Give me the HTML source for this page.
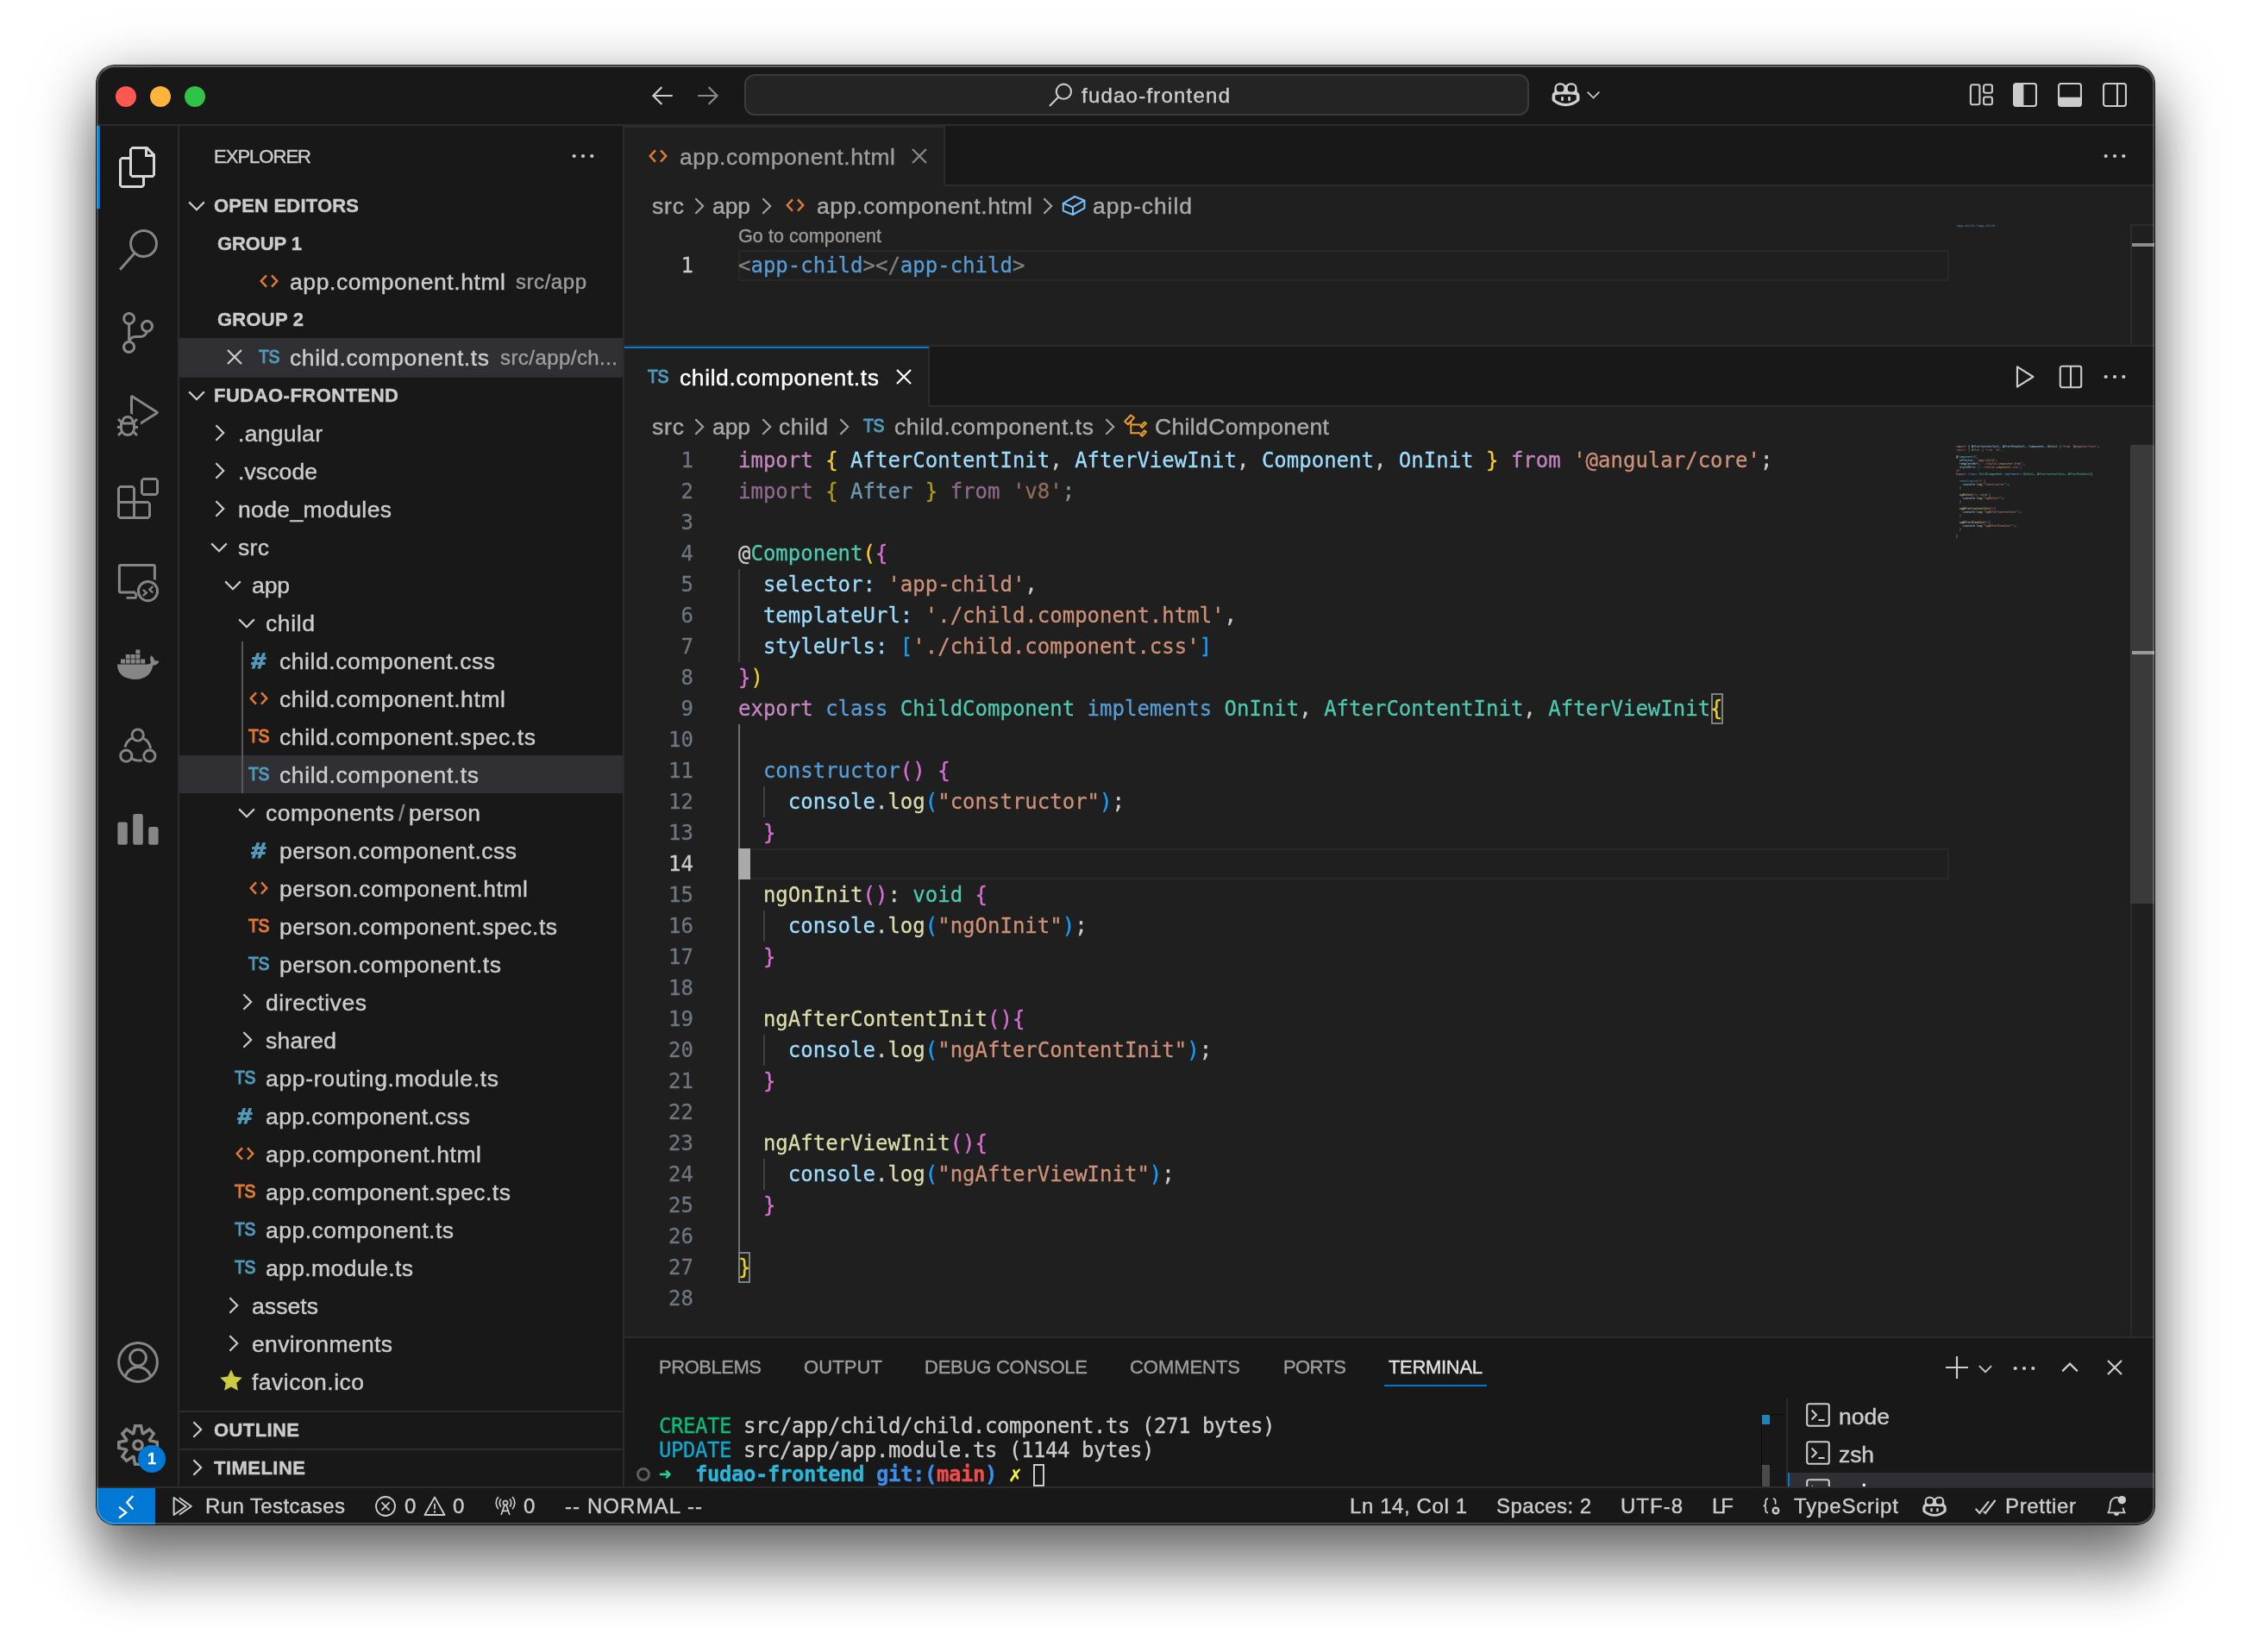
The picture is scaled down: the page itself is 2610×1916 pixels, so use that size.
<!DOCTYPE html>
<html lang="en"><head><meta charset="utf-8"><title>child.component.ts — fudao-frontend</title>
<style>
html,body{margin:0;padding:0;background:#fff;}
body{width:2610px;height:1916px;position:relative;overflow:hidden;font-family:"Liberation Sans",sans-serif;-webkit-font-smoothing:antialiased;}
#sh{position:absolute;left:112px;top:76px;width:2386px;height:1692px;border-radius:21px;
 box-shadow:0 0 0 1px rgba(0,0,0,.85),0 24px 71px rgba(0,0,0,.60),0 74px 52px rgba(0,0,0,.18);}
#w{position:absolute;left:112px;top:76px;width:2386px;height:1692px;border-radius:21px;overflow:hidden;background:#181818;}
#o{position:absolute;left:-112px;top:-76px;width:2610px;height:1916px;will-change:transform;}
#rim{position:absolute;left:112px;top:76px;width:2386px;height:1692px;border-radius:21px;box-sizing:border-box;border:2px solid rgba(255,255,255,.21);border-top-color:rgba(255,255,255,.32);pointer-events:none;}
#o div,#o svg,#o span.a{position:absolute;}
.t{white-space:pre;font-size:26px;color:#ccc;-webkit-text-stroke:0.4px;}
.m{white-space:pre;font-family:"DejaVu Sans Mono","Liberation Mono",monospace;font-size:24px;letter-spacing:0;-webkit-text-stroke:0.3px;}
.m span,.t span{position:static;}
.i{overflow:visible;}
</style></head><body>
<div id="sh"></div>
<div id="w"><div id="o">
<div style="left:112px;top:76px;width:2386px;height:70px;background:#181818;border-bottom:2px solid #2b2b2b;box-sizing:border-box;"></div>
<div style="left:112px;top:146px;width:96px;height:1578px;background:#181818;border-right:2px solid #2b2b2b;box-sizing:border-box;"></div>
<div style="left:208px;top:146px;width:516px;height:1578px;background:#181818;border-right:2px solid #2b2b2b;box-sizing:border-box;"></div>
<div style="left:724px;top:146px;width:1774px;height:1404px;background:#1f1f1f;"></div>
<div style="left:724px;top:1550px;width:1774px;height:174px;background:#181818;border-top:2px solid #2b2b2b;box-sizing:border-box;"></div>
<div style="left:112px;top:1724px;width:2386px;height:44px;background:#181818;border-top:2px solid #2b2b2b;box-sizing:border-box;"></div>
<div style="left:134px;top:100px;width:24px;height:24px;border-radius:50%;background:#fe5850;"></div>
<div style="left:174px;top:100px;width:24px;height:24px;border-radius:50%;background:#fcb43a;"></div>
<div style="left:214px;top:100px;width:24px;height:24px;border-radius:50%;background:#2fc447;"></div>
<svg class="i" style="left:752px;top:95px;" width="32" height="32" viewBox="0 0 16 16" fill="none" stroke="#cccccc" color="#cccccc"><path d="M13.9 8H2.9M7.7 3L2.7 8L7.7 13" fill="none" stroke="currentColor" stroke-width="1.1"/></svg>
<svg class="i" style="left:805px;top:95px;" width="32" height="32" viewBox="0 0 16 16" fill="none" stroke="#8a8a8a" color="#8a8a8a"><path d="M2.1 8H13.1M8.3 3L13.3 8L8.3 13" fill="none" stroke="currentColor" stroke-width="1.1"/></svg>
<div style="left:863px;top:86px;width:910px;height:48px;box-sizing:border-box;border:2px solid #3b3b3b;border-radius:12px;background:#242424;"></div>
<svg class="i" style="left:1214px;top:94px;" width="32" height="32" viewBox="0 0 16 16" fill="none" stroke="#cccccc" color="#cccccc"><circle cx="9.700" cy="6.100" r="4.300" fill="none" stroke="currentColor" stroke-width="1.05"/><path d="M6.600 9.300L1.500 14.500" fill="none" stroke="currentColor" stroke-width="1.05"/></svg>
<div class="t" style="left:1254px;top:87px;height:48px;line-height:48px;font-size:24px;color:#cccccc;letter-spacing:1.221px;">fudao-frontend</div>
<svg class="i" style="left:1798px;top:92px;" width="35" height="35" viewBox="0 0 16 16" fill="none" stroke="#d0d0d0" color="#d0d0d0"><path d="M8 3.3c-.9-1.2-2.4-1.6-3.9-1.2C2.7 2.5 2 3.6 2 5v1.6c-.8.5-1.3 1.3-1.3 2.2v1.8c0 .5.2.9.6 1.2C3.1 13.200 5.400 14.3 8 14.3s4.900-1.100 6.700-2.500c.4-.3.6-.7.6-1.200V8.800c0-.9-.5-1.700-1.300-2.200V5c0-1.400-.7-2.500-2.100-2.900C10.400 1.700 8.900 2.100 8 3.300z" fill="currentColor" stroke="none"/><rect x="3.1" y="3" width="3.9" height="3.6" rx="1.6" fill="#181818" stroke="none"/><rect x="9" y="3" width="3.9" height="3.6" rx="1.6" fill="#181818" stroke="none"/><path d="M2.4 8.400C4 7.900 6 8 8 8s4-.1 5.600.4v2.300C12 12 10 12.800 8 12.800S4 12 2.400 10.700z" fill="#181818" stroke="none"/><rect x="5.500" y="9.100" width="1.300" height="2.400" rx=".65" fill="currentColor" stroke="none"/><rect x="9.200" y="9.100" width="1.300" height="2.400" rx=".65" fill="currentColor" stroke="none"/></svg>
<svg class="i" style="left:1835px;top:97px;" width="25" height="25" viewBox="0 0 16 16" fill="none" stroke="#cccccc" color="#cccccc"><polyline points="3.6,6.2 8,10.6 12.4,6.2" fill="none" stroke="currentColor" stroke-width="1.1"/></svg>
<svg class="i" style="left:2281px;top:94px;" width="32" height="32" viewBox="0 0 16 16" fill="none" stroke="#cccccc" color="#cccccc"><rect x="1.95" y="2.15" width="5.25" height="11.5" rx="1" fill="none" stroke="currentColor" stroke-width="1.05"/><rect x="9.55" y="2.15" width="4.9" height="4.75" rx="1" fill="none" stroke="currentColor" stroke-width="1.05"/><rect x="9.55" y="9.25" width="4.9" height="4.4" rx="1" fill="none" stroke="currentColor" stroke-width="1.05"/></svg>
<svg class="i" style="left:2332px;top:94px;" width="32" height="32" viewBox="0 0 16 16" fill="none" stroke="#cccccc" color="#cccccc"><rect x="1.525" y="1.525" width="12.95" height="12.95" rx="1.3" fill="none" stroke="currentColor" stroke-width="1.05"/><path d="M6.9 1.525V14.475H2.8a1.3 1.3 0 0 1-1.3-1.3V2.8a1.3 1.3 0 0 1 1.3-1.3z" fill="currentColor" stroke="currentColor" stroke-width=".6"/></svg>
<svg class="i" style="left:2384px;top:94px;" width="32" height="32" viewBox="0 0 16 16" fill="none" stroke="#cccccc" color="#cccccc"><rect x="1.525" y="1.525" width="12.95" height="12.95" rx="1.3" fill="none" stroke="currentColor" stroke-width="1.05"/><path d="M1.525 9.700H14.475V13.200a1.300 1.300 0 0 1-1.300 1.300H2.800a1.300 1.300 0 0 1-1.300-1.300z" fill="currentColor" stroke="currentColor" stroke-width=".6"/></svg>
<svg class="i" style="left:2436px;top:94px;" width="32" height="32" viewBox="0 0 16 16" fill="none" stroke="#cccccc" color="#cccccc"><rect x="1.525" y="1.525" width="12.95" height="12.95" rx="1.3" fill="none" stroke="currentColor" stroke-width="1.05"/><path d="M9.500 1.525V14.475" fill="none" stroke="currentColor" stroke-width="1.05"/></svg>
<div style="left:112px;top:146px;width:4px;height:96px;background:#0078d4;"></div>
<svg class="i" style="left:136px;top:170px;" width="48" height="48" viewBox="0 0 24 24" fill="none" stroke="#d7d7d7" color="#d7d7d7"><path fill="currentColor" stroke="none" d="M17.5 0h-9L7 1.5V6H2.5L1 7.5v15.07L2.5 24h12.07L16 22.57V18h4.7l1.3-1.43V4.5L17.5 0zm0 2.12l2.38 2.38H17.5V2.12zm-3 20.38h-12v-15H7v9.07L8.5 18h6v4.5zm6-6h-12v-15H16V6h4.5v10.5z"/></svg>
<svg class="i" style="left:136px;top:266px;" width="48" height="48" viewBox="0 0 24 24" fill="none" stroke="#868686" color="#868686"><path fill="currentColor" stroke="none" d="M15.25 0a8.25 8.25 0 0 0-6.18 13.72L1 22.88l1.12 1 8.05-9.12A8.251 8.251 0 1 0 15.25.01V0zm0 15a6.75 6.75 0 1 1 0-13.5 6.75 6.75 0 0 1 0 13.5z"/></svg>
<svg class="i" style="left:136px;top:362px;" width="48" height="48" viewBox="0 0 24 24" fill="none" stroke="#868686" color="#868686"><path fill="currentColor" stroke="none" d="M21.007 8.222A3.738 3.738 0 0 0 15.045 5.2a3.737 3.737 0 0 0 1.156 6.583 2.988 2.988 0 0 1-2.668 1.67h-2.99a4.456 4.456 0 0 0-2.989 1.165V7.4a3.737 3.737 0 1 0-1.494 0v9.117a3.776 3.776 0 1 0 1.816.099 2.99 2.99 0 0 1 2.668-1.667h2.99a4.484 4.484 0 0 0 4.223-3.039 3.736 3.736 0 0 0 3.25-3.687zM4.565 3.738a2.242 2.242 0 1 1 4.484 0 2.242 2.242 0 0 1-4.484 0zm4.484 16.441a2.242 2.242 0 1 1-4.484 0 2.242 2.242 0 0 1 4.484 0zm8.221-9.715a2.242 2.242 0 1 1 0-4.485 2.242 2.242 0 0 1 0 4.485z"/></svg>
<svg class="i" style="left:136px;top:458px;" width="48" height="48" viewBox="0 0 24 24" fill="none" stroke="#868686" color="#868686"><path fill="currentColor" stroke="none" d="M10.94 13.5l-1.32 1.32a3.73 3.73 0 0 0-7.24 0L1.06 13.5 0 14.56l1.72 1.72-.22.22V18H0v1.5h1.5v.08c.077.489.214.966.41 1.42L0 22.94 1.06 24l1.65-1.65A4.308 4.308 0 0 0 6 24a4.31 4.31 0 0 0 3.29-1.65L10.94 24 12 22.94 10.09 21c.198-.464.336-.951.41-1.45v-.1H12V18h-1.5v-1.5l-.22-.22L12 14.56l-1.06-1.06zM6 13.5a2.25 2.25 0 0 1 2.25 2.25h-4.5A2.25 2.25 0 0 1 6 13.5zm3 6a3.33 3.33 0 0 1-3 3 3.33 3.33 0 0 1-3-3v-2.25h6v2.25zm14.76-9.9v1.26L13.5 17.37V15.6l8.5-5.37L9 2v9.46a5.07 5.07 0 0 0-1.5-.72V.63L8.64 0l15.12 9.6z"/></svg>
<svg class="i" style="left:136px;top:554px;" width="48" height="48" viewBox="0 0 24 24" fill="none" stroke="#868686" color="#868686"><path fill="currentColor" stroke="none" d="M13.5 1.5L15 0h7.5L24 1.5V9l-1.5 1.5H15L13.5 9V1.5zm1.5 0V9h7.5V1.5H15zM0 15V6l1.5-1.5H9L10.5 6v7.5H18l1.5 1.5v7.5L18 24H1.5L0 22.500V15zm9-1.500V6H1.500v7.500H9zM9 15H1.500v7.500H9V15zm1.500 7.500H18V15h-7.500v7.500z"/></svg>
<svg class="i" style="left:136px;top:650px;" width="48" height="48" viewBox="0 0 24 24" fill="none" stroke="#868686" color="#868686"><path d="M21.7 11.2V3.4a.7.7 0 0 0-.7-.7H1.9a.7.7 0 0 0-.7.7v14.35a.7.7 0 0 0 .7.7h8.6" fill="none" stroke="currentColor" stroke-width="1.5"/><path d="M5.3 21.65h5.9M10.55 18.6l.5 2.6" fill="none" stroke="currentColor" stroke-width="1.4"/><circle cx="17.75" cy="17.8" r="5.55" fill="none" stroke="currentColor" stroke-width="1.5"/><path d="M14.9 17l2 1.7-2 1.700M20.600 15.100l-1.900 1.800 1.900 1.800" fill="none" stroke="currentColor" stroke-width="1.15"/></svg>
<svg class="i" style="left:136px;top:746px;" width="48" height="48" viewBox="0 0 24 24" fill="none" stroke="#868686" color="#868686"><path fill="currentColor" stroke="none" d="M0 12.3h16.9c1.2 0 2.1-.3 2.7-1-.7-1.200-.8-2.800 0-4.200 1.200.9 1.900 2 2.100 3.200.9-.3 1.900-.2 2.500.3-.6 1.500-1.900 2.200-3.500 2.300C19.900 17.600 16.500 21 10.500 21 4.500 21 0 18.200 0 12.300z"/><path fill="currentColor" stroke="none" d="M2 9.300h2.500v2.400H2zM4.900 9.300h2.500v2.400H4.900zM7.800 9.300h2.500v2.400H7.800zM10.700 9.300h2.500v2.400h-2.500zM13.600 9.300h2.500v2.400h-2.500zM4.900 6.500h2.500v2.400H4.900zM7.800 6.500h2.500v2.400H7.800zM10.700 6.500h2.500v2.400h-2.500zM10.700 3.700h2.500v2.400h-2.500z"/></svg>
<svg class="i" style="left:136px;top:842px;" width="48" height="48" viewBox="0 0 24 24" fill="none" stroke="#868686" color="#868686"><circle cx="11.85" cy="5.25" r="3.3" fill="none" stroke="currentColor" stroke-width="1.45"/><circle cx="5.15" cy="17.3" r="3.3" fill="none" stroke="currentColor" stroke-width="1.45"/><circle cx="18.7" cy="17.3" r="3.3" fill="none" stroke="currentColor" stroke-width="1.45"/><path d="M8.5 7A8 8 0 0 0 4.500 12.300M15.400 7.200a8 8 0 0 1 3.900 5.900M8.300 18.900c1.700 1.100 4 1.400 6.100.9" fill="none" stroke="currentColor" stroke-width="1.45"/></svg>
<svg class="i" style="left:136px;top:938px;" width="48" height="48" viewBox="0 0 24 24" fill="none" stroke="#868686" color="#868686"><rect x="0.200" y="7.700" width="5.700" height="13.200" rx="1.200" fill="currentColor" stroke="none"/><rect x="9.100" y="3" width="5.800" height="17.900" rx="1.200" fill="currentColor" stroke="none"/><rect x="18.100" y="10.500" width="5.700" height="10.400" rx="1.200" fill="currentColor" stroke="none"/></svg>
<svg class="i" style="left:136px;top:1556px;" width="48" height="48" viewBox="0 0 24 24" fill="none" stroke="#868686" color="#868686"><circle cx="12" cy="12" r="11.200" fill="none" stroke="currentColor" stroke-width="1.5"/><circle cx="12" cy="9.300" r="4.700" fill="none" stroke="currentColor" stroke-width="1.5"/><path d="M4.700 20.200c.9-3.300 3.900-5.400 7.300-5.400s6.400 2.100 7.300 5.400" fill="none" stroke="currentColor" stroke-width="1.5"/></svg>
<svg class="i" style="left:136px;top:1652px;" width="48" height="48" viewBox="0 0 24 24" fill="none" stroke="#868686" color="#868686"><path fill="currentColor" stroke="none" d="M19.85 8.75l4.15.83v4.84l-4.15.83 2.35 3.52-3.43 3.43-3.52-2.35-.83 4.15H9.58l-.83-4.15-3.52 2.35-3.43-3.43 2.35-3.52L0 14.42V9.58l4.15-.83L1.8 5.23 5.23 1.8l3.52 2.35L9.58 0h4.84l.83 4.15 3.52-2.35 3.43 3.43-2.35 3.52zm-1.57 5.07l4-.81v-2l-4-.81-.54-1.3 2.29-3.43-1.43-1.43-3.43 2.29-1.3-.54-.81-4h-2l-.81 4-1.3.54-3.43-2.29-1.430 1.430L6.380 8.900l-.54 1.300-4 .81v2l4 .81.54 1.300-2.290 3.430 1.430 1.430 3.430-2.290 1.300.54.81 4h2l.81-4 1.300-.54 3.430 2.290 1.430-1.430-2.290-3.430.54-1.300zm-8.186-4.672A3.430 3.430 0 0 1 12 8.570 3.440 3.440 0 0 1 15.430 12a3.430 3.430 0 1 1-5.336-2.852zm.956 4.274c.281.188.612.288.95.288A1.700 1.700 0 0 0 13.710 12a1.710 1.710 0 1 0-2.660 1.422z"/></svg>
<div style="left:160px;top:1676px;width:32px;height:32px;border-radius:50%;background:#0078d4;"></div>
<div class="t" style="left:160px;top:1676px;height:32px;line-height:32px;font-size:18px;color:#fff;font-weight:700;width:32px;text-align:center;">1</div>
<div class="t" style="left:248px;top:147px;height:70px;line-height:70px;font-size:22px;color:#cccccc;letter-spacing:-0.975px;">EXPLORER</div>
<svg class="i" style="left:660px;top:165px;" width="32" height="32" viewBox="0 0 16 16" fill="none" stroke="#cccccc" color="#cccccc"><circle cx="2.85" cy="8" r="1.05" fill="currentColor" stroke="none"/><circle cx="8" cy="8" r="1.05" fill="currentColor" stroke="none"/><circle cx="13.15" cy="8" r="1.05" fill="currentColor" stroke="none"/></svg>
<svg class="i" style="left:212px;top:222px;" width="32" height="32" viewBox="0 0 16 16" fill="none" stroke="#cccccc" color="#cccccc"><polyline points="3.6,6.2 8,10.6 12.4,6.2" fill="none" stroke="currentColor" stroke-width="1.1"/></svg>
<div class="t" style="left:248px;top:217px;height:44px;line-height:44px;font-size:22px;color:#cccccc;font-weight:700;letter-spacing:0.195px;">OPEN EDITORS</div>
<div class="t" style="left:252px;top:261px;height:44px;line-height:44px;font-size:22px;color:#cccccc;font-weight:700;letter-spacing:-0.104px;">GROUP 1</div>
<div class="t" style="left:252px;top:349px;height:44px;line-height:44px;font-size:22px;color:#cccccc;font-weight:700;letter-spacing:0.229px;">GROUP 2</div>
<svg class="i" style="left:296px;top:310px;" width="32" height="32" viewBox="0 0 16 16" fill="none" stroke="#e37933" color="#e37933"><path d="M6.5 4.7L3.4 8L6.5 11.3M9.5 4.7L12.6 8L9.5 11.3" fill="none" stroke="currentColor" stroke-width="1.25"/></svg>
<div class="t" style="left:336px;top:305px;height:44px;line-height:44px;font-size:26.5px;color:#cccccc;letter-spacing:0.581px;">app.component.html</div>
<div class="t" style="left:598px;top:305px;height:44px;line-height:44px;font-size:24px;color:#9d9d9d;letter-spacing:0.549px;">src/app</div>
<div style="left:208px;top:392px;width:514px;height:44px;background:#2f2f34;"></div>
<svg class="i" style="left:256px;top:398px;" width="32" height="32" viewBox="0 0 16 16" fill="none" stroke="#cccccc" color="#cccccc"><path d="M4 4L12 12M12 4L4 12" fill="none" stroke="currentColor" stroke-width="1.1"/></svg>
<div class="t" style="left:292px;top:398px;width:40px;height:32px;line-height:32px;font-size:21.5px;color:#519aba;text-align:center;-webkit-text-stroke:1.1px #519aba;transform:scaleX(.9);letter-spacing:-0.3px;">TS</div>
<div class="t" style="left:336px;top:393px;height:44px;line-height:44px;font-size:26.5px;color:#cccccc;letter-spacing:0.59px;">child.component.ts</div>
<div class="t" style="left:580px;top:393px;height:44px;line-height:44px;font-size:24px;color:#9d9d9d;letter-spacing:0.439px;">src/app/ch...</div>
<div style="left:208px;top:436px;width:514px;height:2px;background:#2b2b2b;"></div>
<svg class="i" style="left:212px;top:442px;" width="32" height="32" viewBox="0 0 16 16" fill="none" stroke="#cccccc" color="#cccccc"><polyline points="3.6,6.2 8,10.6 12.4,6.2" fill="none" stroke="currentColor" stroke-width="1.1"/></svg>
<div class="t" style="left:248px;top:437px;height:44px;line-height:44px;font-size:22px;color:#cccccc;font-weight:700;letter-spacing:0.48px;">FUDAO-FRONTEND</div>
<svg class="i" style="left:238px;top:486px;" width="32" height="32" viewBox="0 0 16 16" fill="none" stroke="#cccccc" color="#cccccc"><polyline points="6.2,3.6 10.6,8 6.2,12.4" fill="none" stroke="currentColor" stroke-width="1.1"/></svg>
<div class="t" style="left:276px;top:481px;height:44px;line-height:44px;font-size:26.5px;color:#cccccc;letter-spacing:0.319px;">.angular</div>
<svg class="i" style="left:238px;top:530px;" width="32" height="32" viewBox="0 0 16 16" fill="none" stroke="#cccccc" color="#cccccc"><polyline points="6.2,3.6 10.6,8 6.2,12.4" fill="none" stroke="currentColor" stroke-width="1.1"/></svg>
<div class="t" style="left:276px;top:525px;height:44px;line-height:44px;font-size:26.5px;color:#cccccc;letter-spacing:0.112px;">.vscode</div>
<svg class="i" style="left:238px;top:574px;" width="32" height="32" viewBox="0 0 16 16" fill="none" stroke="#cccccc" color="#cccccc"><polyline points="6.2,3.6 10.6,8 6.2,12.4" fill="none" stroke="currentColor" stroke-width="1.1"/></svg>
<div class="t" style="left:276px;top:569px;height:44px;line-height:44px;font-size:26.5px;color:#cccccc;letter-spacing:0.376px;">node_modules</div>
<svg class="i" style="left:238px;top:618px;" width="32" height="32" viewBox="0 0 16 16" fill="none" stroke="#cccccc" color="#cccccc"><polyline points="3.6,6.2 8,10.6 12.4,6.2" fill="none" stroke="currentColor" stroke-width="1.1"/></svg>
<div class="t" style="left:276px;top:613px;height:44px;line-height:44px;font-size:26.5px;color:#cccccc;letter-spacing:0.336px;">src</div>
<svg class="i" style="left:254px;top:662px;" width="32" height="32" viewBox="0 0 16 16" fill="none" stroke="#cccccc" color="#cccccc"><polyline points="3.6,6.2 8,10.6 12.4,6.2" fill="none" stroke="currentColor" stroke-width="1.1"/></svg>
<div class="t" style="left:292px;top:657px;height:44px;line-height:44px;font-size:26.5px;color:#cccccc;letter-spacing:-0.109px;">app</div>
<svg class="i" style="left:270px;top:706px;" width="32" height="32" viewBox="0 0 16 16" fill="none" stroke="#cccccc" color="#cccccc"><polyline points="3.6,6.2 8,10.6 12.4,6.2" fill="none" stroke="currentColor" stroke-width="1.1"/></svg>
<div class="t" style="left:308px;top:701px;height:44px;line-height:44px;font-size:26.5px;color:#cccccc;letter-spacing:0.621px;">child</div>
<div class="t" style="left:280px;top:750px;width:40px;height:32px;line-height:32px;font-size:25px;font-weight:700;color:#519aba;text-align:center;-webkit-text-stroke:1.2px #519aba;transform:scaleX(1.2) skewX(-3deg);">#</div>
<div class="t" style="left:324px;top:745px;height:44px;line-height:44px;font-size:26.5px;color:#cccccc;letter-spacing:0.55px;">child.component.css</div>
<svg class="i" style="left:284px;top:794px;" width="32" height="32" viewBox="0 0 16 16" fill="none" stroke="#e37933" color="#e37933"><path d="M6.5 4.7L3.4 8L6.5 11.3M9.5 4.7L12.6 8L9.5 11.3" fill="none" stroke="currentColor" stroke-width="1.25"/></svg>
<div class="t" style="left:324px;top:789px;height:44px;line-height:44px;font-size:26.5px;color:#cccccc;letter-spacing:0.61px;">child.component.html</div>
<div class="t" style="left:280px;top:838px;width:40px;height:32px;line-height:32px;font-size:21.5px;color:#e37933;text-align:center;-webkit-text-stroke:1.1px #e37933;transform:scaleX(.9);letter-spacing:-0.3px;">TS</div>
<div class="t" style="left:324px;top:833px;height:44px;line-height:44px;font-size:26.5px;color:#cccccc;letter-spacing:0.577px;">child.component.spec.ts</div>
<div style="left:208px;top:876px;width:514px;height:44px;background:#2f2f34;"></div>
<div class="t" style="left:280px;top:882px;width:40px;height:32px;line-height:32px;font-size:21.5px;color:#519aba;text-align:center;-webkit-text-stroke:1.1px #519aba;transform:scaleX(.9);letter-spacing:-0.3px;">TS</div>
<div class="t" style="left:324px;top:877px;height:44px;line-height:44px;font-size:26.5px;color:#cccccc;letter-spacing:0.59px;">child.component.ts</div>
<svg class="i" style="left:270px;top:926px;" width="32" height="32" viewBox="0 0 16 16" fill="none" stroke="#cccccc" color="#cccccc"><polyline points="3.6,6.2 8,10.6 12.4,6.2" fill="none" stroke="currentColor" stroke-width="1.1"/></svg>
<div class="t" style="left:308px;top:921px;height:44px;line-height:44px;font-size:26.5px;color:#cccccc;letter-spacing:0.514px;">components</div>
<div class="t" style="left:462px;top:921px;height:44px;line-height:44px;font-size:26px;color:#8a8a8a;">/</div>
<div class="t" style="left:474px;top:921px;height:44px;line-height:44px;font-size:26.5px;color:#cccccc;letter-spacing:0.394px;">person</div>
<div class="t" style="left:280px;top:970px;width:40px;height:32px;line-height:32px;font-size:25px;font-weight:700;color:#519aba;text-align:center;-webkit-text-stroke:1.2px #519aba;transform:scaleX(1.2) skewX(-3deg);">#</div>
<div class="t" style="left:324px;top:965px;height:44px;line-height:44px;font-size:26.5px;color:#cccccc;letter-spacing:0.441px;">person.component.css</div>
<svg class="i" style="left:284px;top:1014px;" width="32" height="32" viewBox="0 0 16 16" fill="none" stroke="#e37933" color="#e37933"><path d="M6.5 4.7L3.4 8L6.5 11.3M9.5 4.7L12.6 8L9.5 11.3" fill="none" stroke="currentColor" stroke-width="1.25"/></svg>
<div class="t" style="left:324px;top:1009px;height:44px;line-height:44px;font-size:26.5px;color:#cccccc;letter-spacing:0.553px;">person.component.html</div>
<div class="t" style="left:280px;top:1058px;width:40px;height:32px;line-height:32px;font-size:21.5px;color:#e37933;text-align:center;-webkit-text-stroke:1.1px #e37933;transform:scaleX(.9);letter-spacing:-0.3px;">TS</div>
<div class="t" style="left:324px;top:1053px;height:44px;line-height:44px;font-size:26.5px;color:#cccccc;letter-spacing:0.486px;">person.component.spec.ts</div>
<div class="t" style="left:280px;top:1102px;width:40px;height:32px;line-height:32px;font-size:21.5px;color:#519aba;text-align:center;-webkit-text-stroke:1.1px #519aba;transform:scaleX(.9);letter-spacing:-0.3px;">TS</div>
<div class="t" style="left:324px;top:1097px;height:44px;line-height:44px;font-size:26.5px;color:#cccccc;letter-spacing:0.529px;">person.component.ts</div>
<svg class="i" style="left:270px;top:1146px;" width="32" height="32" viewBox="0 0 16 16" fill="none" stroke="#cccccc" color="#cccccc"><polyline points="6.2,3.6 10.6,8 6.2,12.4" fill="none" stroke="currentColor" stroke-width="1.1"/></svg>
<div class="t" style="left:308px;top:1141px;height:44px;line-height:44px;font-size:26.5px;color:#cccccc;letter-spacing:0.562px;">directives</div>
<svg class="i" style="left:270px;top:1190px;" width="32" height="32" viewBox="0 0 16 16" fill="none" stroke="#cccccc" color="#cccccc"><polyline points="6.2,3.6 10.6,8 6.2,12.4" fill="none" stroke="currentColor" stroke-width="1.1"/></svg>
<div class="t" style="left:308px;top:1185px;height:44px;line-height:44px;font-size:26.5px;color:#cccccc;letter-spacing:0.194px;">shared</div>
<div class="t" style="left:264px;top:1234px;width:40px;height:32px;line-height:32px;font-size:21.5px;color:#519aba;text-align:center;-webkit-text-stroke:1.1px #519aba;transform:scaleX(.9);letter-spacing:-0.3px;">TS</div>
<div class="t" style="left:308px;top:1229px;height:44px;line-height:44px;font-size:26.5px;color:#cccccc;letter-spacing:0.684px;">app-routing.module.ts</div>
<div class="t" style="left:264px;top:1278px;width:40px;height:32px;line-height:32px;font-size:25px;font-weight:700;color:#519aba;text-align:center;-webkit-text-stroke:1.2px #519aba;transform:scaleX(1.2) skewX(-3deg);">#</div>
<div class="t" style="left:308px;top:1273px;height:44px;line-height:44px;font-size:26.5px;color:#cccccc;letter-spacing:0.449px;">app.component.css</div>
<svg class="i" style="left:268px;top:1322px;" width="32" height="32" viewBox="0 0 16 16" fill="none" stroke="#e37933" color="#e37933"><path d="M6.5 4.7L3.4 8L6.5 11.3M9.5 4.7L12.6 8L9.5 11.3" fill="none" stroke="currentColor" stroke-width="1.25"/></svg>
<div class="t" style="left:308px;top:1317px;height:44px;line-height:44px;font-size:26.5px;color:#cccccc;letter-spacing:0.581px;">app.component.html</div>
<div class="t" style="left:264px;top:1366px;width:40px;height:32px;line-height:32px;font-size:21.5px;color:#e37933;text-align:center;-webkit-text-stroke:1.1px #e37933;transform:scaleX(.9);letter-spacing:-0.3px;">TS</div>
<div class="t" style="left:308px;top:1361px;height:44px;line-height:44px;font-size:26.5px;color:#cccccc;letter-spacing:0.499px;">app.component.spec.ts</div>
<div class="t" style="left:264px;top:1410px;width:40px;height:32px;line-height:32px;font-size:21.5px;color:#519aba;text-align:center;-webkit-text-stroke:1.1px #519aba;transform:scaleX(.9);letter-spacing:-0.3px;">TS</div>
<div class="t" style="left:308px;top:1405px;height:44px;line-height:44px;font-size:26.5px;color:#cccccc;letter-spacing:0.489px;">app.component.ts</div>
<div class="t" style="left:264px;top:1454px;width:40px;height:32px;line-height:32px;font-size:21.5px;color:#519aba;text-align:center;-webkit-text-stroke:1.1px #519aba;transform:scaleX(.9);letter-spacing:-0.3px;">TS</div>
<div class="t" style="left:308px;top:1449px;height:44px;line-height:44px;font-size:26.5px;color:#cccccc;letter-spacing:0.378px;">app.module.ts</div>
<svg class="i" style="left:254px;top:1498px;" width="32" height="32" viewBox="0 0 16 16" fill="none" stroke="#cccccc" color="#cccccc"><polyline points="6.2,3.6 10.6,8 6.2,12.4" fill="none" stroke="currentColor" stroke-width="1.1"/></svg>
<div class="t" style="left:292px;top:1493px;height:44px;line-height:44px;font-size:26.5px;color:#cccccc;letter-spacing:0.081px;">assets</div>
<svg class="i" style="left:254px;top:1542px;" width="32" height="32" viewBox="0 0 16 16" fill="none" stroke="#cccccc" color="#cccccc"><polyline points="6.2,3.6 10.6,8 6.2,12.4" fill="none" stroke="currentColor" stroke-width="1.1"/></svg>
<div class="t" style="left:292px;top:1537px;height:44px;line-height:44px;font-size:26.5px;color:#cccccc;letter-spacing:0.357px;">environments</div>
<svg class="i" style="left:253px;top:1586px;" width="30" height="30" viewBox="0 0 16 16" fill="none" stroke="#cbcb41" color="#cbcb41"><path fill="currentColor" stroke="none" d="M8 1.300l2.060 4.330 4.740.62-3.470 3.290.880 4.700L8 11.950l-4.210 2.290.880-4.700L1.200 6.250l4.740-.62z"/></svg>
<div class="t" style="left:292px;top:1581px;height:44px;line-height:44px;font-size:26.5px;color:#cccccc;letter-spacing:0.48px;">favicon.ico</div>
<div style="left:280px;top:744px;width:2px;height:176px;background:#585858;"></div>
<div style="left:208px;top:1636px;width:514px;height:2px;background:#2b2b2b;"></div>
<svg class="i" style="left:212px;top:1642px;" width="32" height="32" viewBox="0 0 16 16" fill="none" stroke="#cccccc" color="#cccccc"><polyline points="6.2,3.6 10.6,8 6.2,12.4" fill="none" stroke="currentColor" stroke-width="1.1"/></svg>
<div class="t" style="left:248px;top:1637px;height:44px;line-height:44px;font-size:22px;color:#cccccc;font-weight:700;letter-spacing:0.406px;">OUTLINE</div>
<div style="left:208px;top:1680px;width:514px;height:2px;background:#2b2b2b;"></div>
<svg class="i" style="left:212px;top:1686px;" width="32" height="32" viewBox="0 0 16 16" fill="none" stroke="#cccccc" color="#cccccc"><polyline points="6.2,3.6 10.6,8 6.2,12.4" fill="none" stroke="currentColor" stroke-width="1.1"/></svg>
<div class="t" style="left:248px;top:1681px;height:44px;line-height:44px;font-size:22px;color:#cccccc;font-weight:700;letter-spacing:0.475px;">TIMELINE</div>
<div style="left:724px;top:146px;width:1774px;height:70px;background:#181818;border-bottom:2px solid #2b2b2b;box-sizing:border-box;"></div>
<div style="left:724px;top:146px;width:372px;height:70px;background:#1f1f1f;border-right:2px solid #2b2b2b;border-top:2px solid #2b2b2b;box-sizing:border-box;"></div>
<svg class="i" style="left:747px;top:165px;" width="32" height="32" viewBox="0 0 16 16" fill="none" stroke="#e37933" color="#e37933"><path d="M6.5 4.7L3.4 8L6.5 11.3M9.5 4.7L12.6 8L9.5 11.3" fill="none" stroke="currentColor" stroke-width="1.25"/></svg>
<div class="t" style="left:788px;top:147px;height:70px;line-height:70px;font-size:26.5px;color:#9d9d9d;letter-spacing:0.581px;">app.component.html</div>
<svg class="i" style="left:1050px;top:165px;" width="32" height="32" viewBox="0 0 16 16" fill="none" stroke="#8a8a8a" color="#8a8a8a"><path d="M4 4L12 12M12 4L4 12" fill="none" stroke="currentColor" stroke-width="1.1"/></svg>
<svg class="i" style="left:2436px;top:165px;" width="32" height="32" viewBox="0 0 16 16" fill="none" stroke="#cccccc" color="#cccccc"><circle cx="2.85" cy="8" r="1.05" fill="currentColor" stroke="none"/><circle cx="8" cy="8" r="1.05" fill="currentColor" stroke="none"/><circle cx="13.15" cy="8" r="1.05" fill="currentColor" stroke="none"/></svg>
<div class="t" style="left:756px;top:217px;height:44px;line-height:44px;font-size:26.5px;color:#a9a9a9;letter-spacing:0.836px;">src</div>
<svg class="i" style="left:794px;top:223px;" width="32" height="32" viewBox="0 0 16 16" fill="none" stroke="#a0a0a0" color="#a0a0a0"><polyline points="6.2,3.6 10.6,8 6.2,12.4" fill="none" stroke="currentColor" stroke-width="1.1"/></svg>
<div class="t" style="left:826px;top:217px;height:44px;line-height:44px;font-size:26.5px;color:#a9a9a9;letter-spacing:-0.109px;">app</div>
<svg class="i" style="left:872px;top:223px;" width="32" height="32" viewBox="0 0 16 16" fill="none" stroke="#a0a0a0" color="#a0a0a0"><polyline points="6.2,3.6 10.6,8 6.2,12.4" fill="none" stroke="currentColor" stroke-width="1.1"/></svg>
<svg class="i" style="left:906px;top:222px;" width="32" height="32" viewBox="0 0 16 16" fill="none" stroke="#e37933" color="#e37933"><path d="M6.5 4.7L3.4 8L6.5 11.3M9.5 4.7L12.6 8L9.5 11.3" fill="none" stroke="currentColor" stroke-width="1.25"/></svg>
<div class="t" style="left:947px;top:217px;height:44px;line-height:44px;font-size:26.5px;color:#a9a9a9;letter-spacing:0.581px;">app.component.html</div>
<svg class="i" style="left:1198px;top:223px;" width="32" height="32" viewBox="0 0 16 16" fill="none" stroke="#a0a0a0" color="#a0a0a0"><polyline points="6.2,3.6 10.6,8 6.2,12.4" fill="none" stroke="currentColor" stroke-width="1.1"/></svg>
<svg class="i" style="left:1229px;top:222px;" width="32" height="32" viewBox="0 0 16 16" fill="none" stroke="#75beff" color="#75beff"><path d="M1.900 6.900L8.600 3L14.200 5.200L7.500 9.100Z" fill="none" stroke="currentColor" stroke-width="1.05" stroke-linejoin="round"/><path d="M1.900 6.900V11.300L7.500 13.500V9.100M7.500 13.500L14.200 9.700V5.200" fill="none" stroke="currentColor" stroke-width="1.05" stroke-linejoin="round"/></svg>
<div class="t" style="left:1267px;top:217px;height:44px;line-height:44px;font-size:26.5px;color:#a9a9a9;letter-spacing:0.932px;">app-child</div>
<div class="t" style="left:856px;top:259px;height:30px;line-height:30px;font-size:21.5px;color:#999999;letter-spacing:0.076px;">Go to component</div>
<div style="left:856px;top:290px;width:1404px;height:36px;box-sizing:border-box;border:2px solid #282828;"></div>
<div class="m" style="left:724px;top:290px;width:80px;height:36px;line-height:36px;text-align:right;color:#cccccc">1</div>
<div class="m" style="left:856px;top:290px;height:36px;line-height:36px;font-size:24px;"><span style="color:#808080">&lt;</span><span style="color:#569cd6">app-child</span><span style="color:#808080">&gt;&lt;/</span><span style="color:#569cd6">app-child</span><span style="color:#808080">&gt;</span></div>
<div class="m" style="left:2268px;top:260px;height:36px;line-height:36px;font-size:24px;transform:scale(.1384,.1111);transform-origin:0 0;opacity:.8;"><span style="color:#808080">&lt;</span><span style="color:#569cd6">app-child</span><span style="color:#808080">&gt;&lt;/</span><span style="color:#569cd6">app-child</span><span style="color:#808080">&gt;</span></div>
<div style="left:2470px;top:260px;width:28px;height:140px;box-sizing:border-box;border-left:2px solid #2b2b2b;border-top:2px solid #2b2b2b;"></div>
<div style="left:2472px;top:282px;width:26px;height:4px;background:#8c8c8c;"></div>
<div style="left:724px;top:400px;width:1774px;height:2px;background:#2b2b2b;"></div>
<div style="left:724px;top:402px;width:1774px;height:70px;background:#181818;border-bottom:2px solid #2b2b2b;box-sizing:border-box;"></div>
<div style="left:724px;top:402px;width:354px;height:70px;background:#1f1f1f;border-right:2px solid #2b2b2b;box-sizing:border-box;border-top:2px solid #0078d4;"></div>
<div class="t" style="left:743px;top:421px;width:40px;height:32px;line-height:32px;font-size:21.5px;color:#519aba;text-align:center;-webkit-text-stroke:1.1px #519aba;transform:scaleX(.9);letter-spacing:-0.3px;">TS</div>
<div class="t" style="left:788px;top:403px;height:70px;line-height:70px;font-size:26.5px;color:#ffffff;letter-spacing:0.59px;">child.component.ts</div>
<svg class="i" style="left:1032px;top:421px;" width="32" height="32" viewBox="0 0 16 16" fill="none" stroke="#ffffff" color="#ffffff"><path d="M4 4L12 12M12 4L4 12" fill="none" stroke="currentColor" stroke-width="1.1"/></svg>
<svg class="i" style="left:2331px;top:421px;" width="32" height="32" viewBox="0 0 16 16" fill="none" stroke="#cccccc" color="#cccccc"><path d="M4 2.2L13.2 8L4 13.8Z" fill="none" stroke="currentColor" stroke-width="1.1" stroke-linejoin="round"/></svg>
<svg class="i" style="left:2385px;top:421px;" width="32" height="32" viewBox="0 0 16 16" fill="none" stroke="#cccccc" color="#cccccc"><rect x="1.9" y="1.9" width="12.2" height="12.2" rx="1.1" fill="none" stroke="currentColor" stroke-width="1.05"/><path d="M8 1.9V14.1" fill="none" stroke="currentColor" stroke-width="1.05"/></svg>
<svg class="i" style="left:2436px;top:421px;" width="32" height="32" viewBox="0 0 16 16" fill="none" stroke="#cccccc" color="#cccccc"><circle cx="2.85" cy="8" r="1.05" fill="currentColor" stroke="none"/><circle cx="8" cy="8" r="1.05" fill="currentColor" stroke="none"/><circle cx="13.15" cy="8" r="1.05" fill="currentColor" stroke="none"/></svg>
<div class="t" style="left:756px;top:473px;height:44px;line-height:44px;font-size:26.5px;color:#a9a9a9;letter-spacing:0.836px;">src</div>
<svg class="i" style="left:794px;top:479px;" width="32" height="32" viewBox="0 0 16 16" fill="none" stroke="#a0a0a0" color="#a0a0a0"><polyline points="6.2,3.6 10.6,8 6.2,12.4" fill="none" stroke="currentColor" stroke-width="1.1"/></svg>
<div class="t" style="left:826px;top:473px;height:44px;line-height:44px;font-size:26.5px;color:#a9a9a9;letter-spacing:-0.109px;">app</div>
<svg class="i" style="left:872px;top:479px;" width="32" height="32" viewBox="0 0 16 16" fill="none" stroke="#a0a0a0" color="#a0a0a0"><polyline points="6.2,3.6 10.6,8 6.2,12.4" fill="none" stroke="currentColor" stroke-width="1.1"/></svg>
<div class="t" style="left:903px;top:473px;height:44px;line-height:44px;font-size:26.5px;color:#a9a9a9;letter-spacing:0.621px;">child</div>
<svg class="i" style="left:962px;top:479px;" width="32" height="32" viewBox="0 0 16 16" fill="none" stroke="#a0a0a0" color="#a0a0a0"><polyline points="6.2,3.6 10.6,8 6.2,12.4" fill="none" stroke="currentColor" stroke-width="1.1"/></svg>
<div class="t" style="left:993px;top:478px;width:40px;height:32px;line-height:32px;font-size:21.5px;color:#519aba;text-align:center;-webkit-text-stroke:1.1px #519aba;transform:scaleX(.9);letter-spacing:-0.3px;">TS</div>
<div class="t" style="left:1037px;top:473px;height:44px;line-height:44px;font-size:26.5px;color:#a9a9a9;letter-spacing:0.59px;">child.component.ts</div>
<svg class="i" style="left:1270px;top:479px;" width="32" height="32" viewBox="0 0 16 16" fill="none" stroke="#a0a0a0" color="#a0a0a0"><polyline points="6.2,3.6 10.6,8 6.2,12.4" fill="none" stroke="currentColor" stroke-width="1.1"/></svg>
<svg class="i" style="left:1301px;top:478px;" width="32" height="32" viewBox="0 0 16 16" fill="none" stroke="#ee9d28" color="#ee9d28"><path d="M1.600 5.350L5.100 1.750L7 3.300L3.400 7.100Z" fill="none" stroke="currentColor" stroke-width="1" stroke-linejoin="round"/><path d="M5.150 5.600V12.100H10.600M5.150 7.200H10.600" fill="none" stroke="currentColor" stroke-width="1"/><path d="M10.700 8.150L12.950 5.800L14 6.550L11.750 8.950Z M10.700 13.050L12.950 10.700L14 11.450L11.750 13.850Z" fill="none" stroke="currentColor" stroke-width="1" stroke-linejoin="round"/></svg>
<div class="t" style="left:1339px;top:473px;height:44px;line-height:44px;font-size:26.5px;color:#a9a9a9;letter-spacing:0.353px;">ChildComponent</div>
<div style="left:856px;top:984px;width:1404px;height:36px;box-sizing:border-box;border:2px solid #282828;"></div>
<div style="left:856px;top:660px;width:2px;height:108px;background:#404040;"></div>
<div style="left:856px;top:840px;width:2px;height:612px;background:#707070;"></div>
<div style="left:885px;top:912px;width:2px;height:36px;background:#404040;"></div>
<div style="left:885px;top:1056px;width:2px;height:36px;background:#404040;"></div>
<div style="left:885px;top:1200px;width:2px;height:36px;background:#404040;"></div>
<div style="left:885px;top:1344px;width:2px;height:36px;background:#404040;"></div>
<div style="left:1984px;top:804px;width:14px;height:36px;box-sizing:border-box;border:2px solid #808080;background:rgba(0,100,0,.1);"></div>
<div style="left:856px;top:1452px;width:14px;height:36px;box-sizing:border-box;border:2px solid #808080;background:rgba(0,100,0,.1);"></div>
<div class="m" style="left:724px;top:516px;width:80px;height:36px;line-height:36px;text-align:right;color:#6e7681">1</div>
<div class="m" style="left:856px;top:516px;height:36px;line-height:36px;font-size:24px;"><span style="color:#c586c0">import</span><span style="color:#cccccc"> </span><span style="color:#f9cc2f">{</span><span style="color:#cccccc"> </span><span style="color:#9cdcfe">AfterContentInit</span><span style="color:#cccccc">, </span><span style="color:#9cdcfe">AfterViewInit</span><span style="color:#cccccc">, </span><span style="color:#9cdcfe">Component</span><span style="color:#cccccc">, </span><span style="color:#9cdcfe">OnInit</span><span style="color:#cccccc"> </span><span style="color:#f9cc2f">}</span><span style="color:#cccccc"> </span><span style="color:#c586c0">from</span><span style="color:#cccccc"> </span><span style="color:#ce9178">'@angular/core'</span><span style="color:#cccccc">;</span></div>
<div class="m" style="left:724px;top:552px;width:80px;height:36px;line-height:36px;text-align:right;color:#6e7681">2</div>
<div class="m" style="left:856px;top:552px;height:36px;line-height:36px;font-size:24px;"><span style="color:#8e6a8c">import</span><span style="color:#cccccc"> </span><span style="color:#b39a17">{</span><span style="color:#cccccc"> </span><span style="color:#7099b0">After</span><span style="color:#cccccc"> </span><span style="color:#b39a17">}</span><span style="color:#cccccc"> </span><span style="color:#8e6a8c">from</span><span style="color:#cccccc"> </span><span style="color:#936b5a">'v8'</span><span style="color:#929292">;</span></div>
<div class="m" style="left:724px;top:588px;width:80px;height:36px;line-height:36px;text-align:right;color:#6e7681">3</div>
<div class="m" style="left:724px;top:624px;width:80px;height:36px;line-height:36px;text-align:right;color:#6e7681">4</div>
<div class="m" style="left:856px;top:624px;height:36px;line-height:36px;font-size:24px;"><span style="color:#cccccc">@</span><span style="color:#4ec9b0">Component</span><span style="color:#f9cc2f">(</span><span style="color:#da70d6">{</span></div>
<div class="m" style="left:724px;top:660px;width:80px;height:36px;line-height:36px;text-align:right;color:#6e7681">5</div>
<div class="m" style="left:856px;top:660px;height:36px;line-height:36px;font-size:24px;"><span style="color:#9cdcfe">  selector:</span><span style="color:#cccccc"> </span><span style="color:#ce9178">'app-child'</span><span style="color:#cccccc">,</span></div>
<div class="m" style="left:724px;top:696px;width:80px;height:36px;line-height:36px;text-align:right;color:#6e7681">6</div>
<div class="m" style="left:856px;top:696px;height:36px;line-height:36px;font-size:24px;"><span style="color:#9cdcfe">  templateUrl:</span><span style="color:#cccccc"> </span><span style="color:#ce9178">'./child.component.html'</span><span style="color:#cccccc">,</span></div>
<div class="m" style="left:724px;top:732px;width:80px;height:36px;line-height:36px;text-align:right;color:#6e7681">7</div>
<div class="m" style="left:856px;top:732px;height:36px;line-height:36px;font-size:24px;"><span style="color:#9cdcfe">  styleUrls:</span><span style="color:#cccccc"> </span><span style="color:#179fff">[</span><span style="color:#ce9178">'./child.component.css'</span><span style="color:#179fff">]</span></div>
<div class="m" style="left:724px;top:768px;width:80px;height:36px;line-height:36px;text-align:right;color:#6e7681">8</div>
<div class="m" style="left:856px;top:768px;height:36px;line-height:36px;font-size:24px;"><span style="color:#da70d6">}</span><span style="color:#f9cc2f">)</span></div>
<div class="m" style="left:724px;top:804px;width:80px;height:36px;line-height:36px;text-align:right;color:#6e7681">9</div>
<div class="m" style="left:856px;top:804px;height:36px;line-height:36px;font-size:24px;"><span style="color:#c586c0">export</span><span style="color:#cccccc"> </span><span style="color:#569cd6">class</span><span style="color:#cccccc"> </span><span style="color:#4ec9b0">ChildComponent</span><span style="color:#cccccc"> </span><span style="color:#569cd6">implements</span><span style="color:#cccccc"> </span><span style="color:#4ec9b0">OnInit</span><span style="color:#cccccc">, </span><span style="color:#4ec9b0">AfterContentInit</span><span style="color:#cccccc">, </span><span style="color:#4ec9b0">AfterViewInit</span><span style="color:#f9cc2f">{</span></div>
<div class="m" style="left:724px;top:840px;width:80px;height:36px;line-height:36px;text-align:right;color:#6e7681">10</div>
<div class="m" style="left:724px;top:876px;width:80px;height:36px;line-height:36px;text-align:right;color:#6e7681">11</div>
<div class="m" style="left:856px;top:876px;height:36px;line-height:36px;font-size:24px;"><span style="color:#569cd6">  constructor</span><span style="color:#da70d6">()</span><span style="color:#cccccc"> </span><span style="color:#da70d6">{</span></div>
<div class="m" style="left:724px;top:912px;width:80px;height:36px;line-height:36px;text-align:right;color:#6e7681">12</div>
<div class="m" style="left:856px;top:912px;height:36px;line-height:36px;font-size:24px;"><span style="color:#9cdcfe">    console</span><span style="color:#cccccc">.</span><span style="color:#dcdcaa">log</span><span style="color:#179fff">(</span><span style="color:#ce9178">"constructor"</span><span style="color:#179fff">)</span><span style="color:#cccccc">;</span></div>
<div class="m" style="left:724px;top:948px;width:80px;height:36px;line-height:36px;text-align:right;color:#6e7681">13</div>
<div class="m" style="left:856px;top:948px;height:36px;line-height:36px;font-size:24px;"><span style="color:#da70d6">  }</span></div>
<div class="m" style="left:724px;top:984px;width:80px;height:36px;line-height:36px;text-align:right;color:#cccccc">14</div>
<div class="m" style="left:724px;top:1020px;width:80px;height:36px;line-height:36px;text-align:right;color:#6e7681">15</div>
<div class="m" style="left:856px;top:1020px;height:36px;line-height:36px;font-size:24px;"><span style="color:#dcdcaa">  ngOnInit</span><span style="color:#da70d6">()</span><span style="color:#cccccc">: </span><span style="color:#4ec9b0">void</span><span style="color:#cccccc"> </span><span style="color:#da70d6">{</span></div>
<div class="m" style="left:724px;top:1056px;width:80px;height:36px;line-height:36px;text-align:right;color:#6e7681">16</div>
<div class="m" style="left:856px;top:1056px;height:36px;line-height:36px;font-size:24px;"><span style="color:#9cdcfe">    console</span><span style="color:#cccccc">.</span><span style="color:#dcdcaa">log</span><span style="color:#179fff">(</span><span style="color:#ce9178">"ngOnInit"</span><span style="color:#179fff">)</span><span style="color:#cccccc">;</span></div>
<div class="m" style="left:724px;top:1092px;width:80px;height:36px;line-height:36px;text-align:right;color:#6e7681">17</div>
<div class="m" style="left:856px;top:1092px;height:36px;line-height:36px;font-size:24px;"><span style="color:#da70d6">  }</span></div>
<div class="m" style="left:724px;top:1128px;width:80px;height:36px;line-height:36px;text-align:right;color:#6e7681">18</div>
<div class="m" style="left:724px;top:1164px;width:80px;height:36px;line-height:36px;text-align:right;color:#6e7681">19</div>
<div class="m" style="left:856px;top:1164px;height:36px;line-height:36px;font-size:24px;"><span style="color:#dcdcaa">  ngAfterContentInit</span><span style="color:#da70d6">(){</span></div>
<div class="m" style="left:724px;top:1200px;width:80px;height:36px;line-height:36px;text-align:right;color:#6e7681">20</div>
<div class="m" style="left:856px;top:1200px;height:36px;line-height:36px;font-size:24px;"><span style="color:#9cdcfe">    console</span><span style="color:#cccccc">.</span><span style="color:#dcdcaa">log</span><span style="color:#179fff">(</span><span style="color:#ce9178">"ngAfterContentInit"</span><span style="color:#179fff">)</span><span style="color:#cccccc">;</span></div>
<div class="m" style="left:724px;top:1236px;width:80px;height:36px;line-height:36px;text-align:right;color:#6e7681">21</div>
<div class="m" style="left:856px;top:1236px;height:36px;line-height:36px;font-size:24px;"><span style="color:#da70d6">  }</span></div>
<div class="m" style="left:724px;top:1272px;width:80px;height:36px;line-height:36px;text-align:right;color:#6e7681">22</div>
<div class="m" style="left:724px;top:1308px;width:80px;height:36px;line-height:36px;text-align:right;color:#6e7681">23</div>
<div class="m" style="left:856px;top:1308px;height:36px;line-height:36px;font-size:24px;"><span style="color:#dcdcaa">  ngAfterViewInit</span><span style="color:#da70d6">(){</span></div>
<div class="m" style="left:724px;top:1344px;width:80px;height:36px;line-height:36px;text-align:right;color:#6e7681">24</div>
<div class="m" style="left:856px;top:1344px;height:36px;line-height:36px;font-size:24px;"><span style="color:#9cdcfe">    console</span><span style="color:#cccccc">.</span><span style="color:#dcdcaa">log</span><span style="color:#179fff">(</span><span style="color:#ce9178">"ngAfterViewInit"</span><span style="color:#179fff">)</span><span style="color:#cccccc">;</span></div>
<div class="m" style="left:724px;top:1380px;width:80px;height:36px;line-height:36px;text-align:right;color:#6e7681">25</div>
<div class="m" style="left:856px;top:1380px;height:36px;line-height:36px;font-size:24px;"><span style="color:#da70d6">  }</span></div>
<div class="m" style="left:724px;top:1416px;width:80px;height:36px;line-height:36px;text-align:right;color:#6e7681">26</div>
<div class="m" style="left:724px;top:1452px;width:80px;height:36px;line-height:36px;text-align:right;color:#6e7681">27</div>
<div class="m" style="left:856px;top:1452px;height:36px;line-height:36px;font-size:24px;"><span style="color:#f9cc2f">}</span></div>
<div class="m" style="left:724px;top:1488px;width:80px;height:36px;line-height:36px;text-align:right;color:#6e7681">28</div>
<div style="left:856px;top:984px;width:14px;height:36px;background:#a9a9a9;"></div>
<div style="left:2268px;top:516px;width:1500px;height:1008px;transform:scale(.1384,.1111);transform-origin:0 0;opacity:.85;"><div class="m" style="left:0;top:0px;height:36px;line-height:36px;"><span style="color:#c586c0">import</span><span style="color:#cccccc"> </span><span style="color:#f9cc2f">{</span><span style="color:#cccccc"> </span><span style="color:#9cdcfe">AfterContentInit</span><span style="color:#cccccc">, </span><span style="color:#9cdcfe">AfterViewInit</span><span style="color:#cccccc">, </span><span style="color:#9cdcfe">Component</span><span style="color:#cccccc">, </span><span style="color:#9cdcfe">OnInit</span><span style="color:#cccccc"> </span><span style="color:#f9cc2f">}</span><span style="color:#cccccc"> </span><span style="color:#c586c0">from</span><span style="color:#cccccc"> </span><span style="color:#ce9178">'@angular/core'</span><span style="color:#cccccc">;</span></div><div class="m" style="left:0;top:36px;height:36px;line-height:36px;"><span style="color:#8e6a8c">import</span><span style="color:#cccccc"> </span><span style="color:#b39a17">{</span><span style="color:#cccccc"> </span><span style="color:#7099b0">After</span><span style="color:#cccccc"> </span><span style="color:#b39a17">}</span><span style="color:#cccccc"> </span><span style="color:#8e6a8c">from</span><span style="color:#cccccc"> </span><span style="color:#936b5a">'v8'</span><span style="color:#929292">;</span></div><div class="m" style="left:0;top:108px;height:36px;line-height:36px;"><span style="color:#cccccc">@</span><span style="color:#4ec9b0">Component</span><span style="color:#f9cc2f">(</span><span style="color:#da70d6">{</span></div><div class="m" style="left:0;top:144px;height:36px;line-height:36px;"><span style="color:#9cdcfe">  selector:</span><span style="color:#cccccc"> </span><span style="color:#ce9178">'app-child'</span><span style="color:#cccccc">,</span></div><div class="m" style="left:0;top:180px;height:36px;line-height:36px;"><span style="color:#9cdcfe">  templateUrl:</span><span style="color:#cccccc"> </span><span style="color:#ce9178">'./child.component.html'</span><span style="color:#cccccc">,</span></div><div class="m" style="left:0;top:216px;height:36px;line-height:36px;"><span style="color:#9cdcfe">  styleUrls:</span><span style="color:#cccccc"> </span><span style="color:#179fff">[</span><span style="color:#ce9178">'./child.component.css'</span><span style="color:#179fff">]</span></div><div class="m" style="left:0;top:252px;height:36px;line-height:36px;"><span style="color:#da70d6">}</span><span style="color:#f9cc2f">)</span></div><div class="m" style="left:0;top:288px;height:36px;line-height:36px;"><span style="color:#c586c0">export</span><span style="color:#cccccc"> </span><span style="color:#569cd6">class</span><span style="color:#cccccc"> </span><span style="color:#4ec9b0">ChildComponent</span><span style="color:#cccccc"> </span><span style="color:#569cd6">implements</span><span style="color:#cccccc"> </span><span style="color:#4ec9b0">OnInit</span><span style="color:#cccccc">, </span><span style="color:#4ec9b0">AfterContentInit</span><span style="color:#cccccc">, </span><span style="color:#4ec9b0">AfterViewInit</span><span style="color:#f9cc2f">{</span></div><div class="m" style="left:0;top:360px;height:36px;line-height:36px;"><span style="color:#569cd6">  constructor</span><span style="color:#da70d6">()</span><span style="color:#cccccc"> </span><span style="color:#da70d6">{</span></div><div class="m" style="left:0;top:396px;height:36px;line-height:36px;"><span style="color:#9cdcfe">    console</span><span style="color:#cccccc">.</span><span style="color:#dcdcaa">log</span><span style="color:#179fff">(</span><span style="color:#ce9178">"constructor"</span><span style="color:#179fff">)</span><span style="color:#cccccc">;</span></div><div class="m" style="left:0;top:432px;height:36px;line-height:36px;"><span style="color:#da70d6">  }</span></div><div class="m" style="left:0;top:504px;height:36px;line-height:36px;"><span style="color:#dcdcaa">  ngOnInit</span><span style="color:#da70d6">()</span><span style="color:#cccccc">: </span><span style="color:#4ec9b0">void</span><span style="color:#cccccc"> </span><span style="color:#da70d6">{</span></div><div class="m" style="left:0;top:540px;height:36px;line-height:36px;"><span style="color:#9cdcfe">    console</span><span style="color:#cccccc">.</span><span style="color:#dcdcaa">log</span><span style="color:#179fff">(</span><span style="color:#ce9178">"ngOnInit"</span><span style="color:#179fff">)</span><span style="color:#cccccc">;</span></div><div class="m" style="left:0;top:576px;height:36px;line-height:36px;"><span style="color:#da70d6">  }</span></div><div class="m" style="left:0;top:648px;height:36px;line-height:36px;"><span style="color:#dcdcaa">  ngAfterContentInit</span><span style="color:#da70d6">(){</span></div><div class="m" style="left:0;top:684px;height:36px;line-height:36px;"><span style="color:#9cdcfe">    console</span><span style="color:#cccccc">.</span><span style="color:#dcdcaa">log</span><span style="color:#179fff">(</span><span style="color:#ce9178">"ngAfterContentInit"</span><span style="color:#179fff">)</span><span style="color:#cccccc">;</span></div><div class="m" style="left:0;top:720px;height:36px;line-height:36px;"><span style="color:#da70d6">  }</span></div><div class="m" style="left:0;top:792px;height:36px;line-height:36px;"><span style="color:#dcdcaa">  ngAfterViewInit</span><span style="color:#da70d6">(){</span></div><div class="m" style="left:0;top:828px;height:36px;line-height:36px;"><span style="color:#9cdcfe">    console</span><span style="color:#cccccc">.</span><span style="color:#dcdcaa">log</span><span style="color:#179fff">(</span><span style="color:#ce9178">"ngAfterViewInit"</span><span style="color:#179fff">)</span><span style="color:#cccccc">;</span></div><div class="m" style="left:0;top:864px;height:36px;line-height:36px;"><span style="color:#da70d6">  }</span></div><div class="m" style="left:0;top:936px;height:36px;line-height:36px;"><span style="color:#f9cc2f">}</span></div></div>
<div style="left:2470px;top:516px;width:2px;height:1034px;background:#2b2b2b;"></div>
<div style="left:2470px;top:516px;width:28px;height:532px;background:#3a3a3a;"></div>
<div style="left:2472px;top:755px;width:26px;height:4px;background:#9a9a9a;"></div>
<div class="t" style="left:764px;top:1551px;height:70px;line-height:70px;font-size:22px;color:#9d9d9d;letter-spacing:-0.467px;">PROBLEMS</div>
<div class="t" style="left:932px;top:1551px;height:70px;line-height:70px;font-size:22px;color:#9d9d9d;letter-spacing:0.109px;">OUTPUT</div>
<div class="t" style="left:1072px;top:1551px;height:70px;line-height:70px;font-size:22px;color:#9d9d9d;letter-spacing:-0.245px;">DEBUG CONSOLE</div>
<div class="t" style="left:1310px;top:1551px;height:70px;line-height:70px;font-size:22px;color:#9d9d9d;letter-spacing:-0.047px;">COMMENTS</div>
<div class="t" style="left:1488px;top:1551px;height:70px;line-height:70px;font-size:22px;color:#9d9d9d;letter-spacing:-0.598px;">PORTS</div>
<div class="t" style="left:1610px;top:1551px;height:70px;line-height:70px;font-size:22px;color:#e0e0e0;letter-spacing:-0.321px;">TERMINAL</div>
<div style="left:1605px;top:1606px;width:119px;height:2px;background:#0078d4;"></div>
<svg class="i" style="left:2253px;top:1570px;" width="32" height="32" viewBox="0 0 16 16" fill="none" stroke="#cccccc" color="#cccccc"><path d="M8 1.5V14.5M1.5 8H14.5" fill="none" stroke="currentColor" stroke-width="1.1"/></svg>
<svg class="i" style="left:2289px;top:1574px;" width="26" height="26" viewBox="0 0 16 16" fill="none" stroke="#cccccc" color="#cccccc"><polyline points="3.6,6.2 8,10.6 12.4,6.2" fill="none" stroke="currentColor" stroke-width="1.1"/></svg>
<svg class="i" style="left:2331px;top:1571px;" width="32" height="32" viewBox="0 0 16 16" fill="none" stroke="#cccccc" color="#cccccc"><circle cx="2.85" cy="8" r="1.05" fill="currentColor" stroke="none"/><circle cx="8" cy="8" r="1.05" fill="currentColor" stroke="none"/><circle cx="13.15" cy="8" r="1.05" fill="currentColor" stroke="none"/></svg>
<svg class="i" style="left:2384px;top:1570px;" width="32" height="32" viewBox="0 0 16 16" fill="none" stroke="#cccccc" color="#cccccc"><polyline points="3.6,10.2 8,5.8 12.4,10.2" fill="none" stroke="currentColor" stroke-width="1.1"/></svg>
<svg class="i" style="left:2436px;top:1570px;" width="32" height="32" viewBox="0 0 16 16" fill="none" stroke="#cccccc" color="#cccccc"><path d="M4 4L12 12M12 4L4 12" fill="none" stroke="currentColor" stroke-width="1.1"/></svg>
<div class="m" style="left:764px;top:1639px;height:30px;line-height:30px;letter-spacing:-0.45px;"><span style="color:#0dbc79;">CREATE</span><span style="color:#cccccc;"> src/app/child/child.component.ts (271 bytes)</span></div>
<div class="m" style="left:764px;top:1667px;height:30px;line-height:30px;letter-spacing:-0.45px;"><span style="color:#11a8cd;">UPDATE</span><span style="color:#cccccc;"> src/app/app.module.ts (1144 bytes)</span></div>
<div class="m" style="left:764px;top:1695px;height:30px;line-height:30px;letter-spacing:-0.45px;"><span style="color:#23d18b;font-weight:bold;">➜</span><span style="color:#cccccc;">  </span><span style="color:#29b8db;font-weight:bold;">fudao-frontend</span><span style="color:#cccccc;"> </span><span style="color:#3b8eea;font-weight:bold;">git:(</span><span style="color:#f14c4c;font-weight:bold;">main</span><span style="color:#3b8eea;font-weight:bold;">)</span><span style="color:#cccccc;"> </span><span style="color:#f5f543;font-weight:bold;">✗</span><span style="color:#cccccc;"> </span></div>
<div style="left:1198px;top:1698px;width:13px;height:26px;box-sizing:border-box;border:2px solid #cccccc;"></div>
<div style="left:738px;top:1702px;width:16px;height:16px;box-sizing:border-box;border:3px solid #5f5f5f;border-radius:50%;"></div>
<div style="left:2042px;top:1640px;width:29px;height:84px;box-sizing:border-box;border-left:1px solid #0c0c0c;border-top:1px solid #0c0c0c;"></div>
<div style="left:2043px;top:1641px;width:9px;height:11px;background:#1a85b8;"></div>
<div style="left:2043px;top:1699px;width:9px;height:25px;background:#4a4a4a;"></div>
<div style="left:2071px;top:1622px;width:2px;height:102px;background:#2b2b2b;"></div>
<svg class="i" style="left:2092px;top:1625px;" width="32" height="32" viewBox="0 0 16 16" fill="none" stroke="#cccccc" color="#cccccc"><rect x="1.600" y="1.600" width="12.800" height="12.800" rx="1.200" fill="none" stroke="currentColor" stroke-width="1.05"/><path d="M4.300 5.300L7 8L4.300 10.700M8.200 11h3.600" fill="none" stroke="currentColor" stroke-width="1.05"/></svg>
<div class="t" style="left:2132px;top:1621px;height:44px;line-height:44px;font-size:26.5px;color:#cccccc;letter-spacing:0.016px;">node</div>
<svg class="i" style="left:2092px;top:1669px;" width="32" height="32" viewBox="0 0 16 16" fill="none" stroke="#cccccc" color="#cccccc"><rect x="1.600" y="1.600" width="12.800" height="12.800" rx="1.200" fill="none" stroke="currentColor" stroke-width="1.05"/><path d="M4.300 5.300L7 8L4.300 10.700M8.200 11h3.600" fill="none" stroke="currentColor" stroke-width="1.05"/></svg>
<div class="t" style="left:2132px;top:1665px;height:44px;line-height:44px;font-size:26.5px;color:#cccccc;letter-spacing:-0.125px;">zsh</div>
<div style="left:2073px;top:1708px;width:425px;height:44px;background:#2f2f34;"></div>
<div style="left:2073px;top:1708px;width:2px;height:44px;background:#0078d4;"></div>
<svg class="i" style="left:2092px;top:1713px;" width="32" height="32" viewBox="0 0 16 16" fill="none" stroke="#cccccc" color="#cccccc"><rect x="1.600" y="1.600" width="12.800" height="12.800" rx="1.200" fill="none" stroke="currentColor" stroke-width="1.05"/><path d="M4.300 5.300L7 8L4.300 10.700M8.200 11h3.600" fill="none" stroke="currentColor" stroke-width="1.05"/></svg>
<div class="t" style="left:2132px;top:1709px;height:44px;line-height:44px;font-size:26.5px;color:#ffffff;letter-spacing:-0.125px;">zsh</div>
<div style="left:112px;top:1724px;width:2386px;height:44px;background:#181818;border-top:2px solid #2b2b2b;box-sizing:border-box;"></div>
<div style="left:112px;top:1726px;width:68px;height:42px;background:#0078d4;"></div>
<svg class="i" style="left:128px;top:1729px;" width="35" height="35" viewBox="0 0 16 16" fill="none" stroke="#ffffff" color="#ffffff"><path d="M4.6 8.600L8.300 11.500L4.600 14.400M12 2.700L8.800 6.200L12 9.800" fill="none" stroke="currentColor" stroke-width="1.05"/></svg>
<svg class="i" style="left:195px;top:1731px;" width="32" height="32" viewBox="0 0 16 16" fill="none" stroke="#cccccc" color="#cccccc"><path d="M3.300 3L10.400 8L3.300 13Z" fill="none" stroke="currentColor" stroke-width="1" stroke-linejoin="round"/><path d="M6.500 3.100L13.400 8L6.500 12.900" fill="none" stroke="currentColor" stroke-width="1" stroke-linejoin="round"/></svg>
<div class="t" style="left:238px;top:1726px;height:42px;line-height:42px;font-size:24px;color:#cccccc;letter-spacing:0.418px;">Run Testcases</div>
<svg class="i" style="left:433px;top:1733px;" width="28" height="28" viewBox="0 0 16 16" fill="none" stroke="#cccccc" color="#cccccc"><circle cx="8" cy="8" r="6.300" fill="none" stroke="currentColor" stroke-width="1.05"/><path d="M5.400 5.400L10.600 10.600M10.600 5.400L5.400 10.600" fill="none" stroke="currentColor" stroke-width="1.05"/></svg>
<div class="t" style="left:469px;top:1726px;height:42px;line-height:42px;font-size:24px;color:#cccccc;">0</div>
<svg class="i" style="left:490px;top:1733px;" width="28" height="28" viewBox="0 0 16 16" fill="none" stroke="#cccccc" color="#cccccc"><path d="M8 2L14.600 13.700H1.400Z" fill="none" stroke="currentColor" stroke-width="1.05" stroke-linejoin="round"/><path d="M8 6.200V10" fill="none" stroke="currentColor" stroke-width="1.05"/><circle cx="8" cy="11.700" r=".7" fill="currentColor" stroke="none"/></svg>
<div class="t" style="left:525px;top:1726px;height:42px;line-height:42px;font-size:24px;color:#cccccc;">0</div>
<svg class="i" style="left:573px;top:1734px;" width="26" height="26" viewBox="0 0 16 16" fill="none" stroke="#cccccc" color="#cccccc"><circle cx="8" cy="5.600" r="1.600" fill="none" stroke="currentColor" stroke-width="1.05"/><path d="M7.300 7.300L5 14.200M8.700 7.300L11 14.200M6 11.300h4" fill="none" stroke="currentColor" stroke-width="1.05"/><path d="M4.900 2.800a4.200 4.200 0 0 0 0 5.600M11.100 2.800a4.200 4.200 0 0 1 0 5.600M3 1.200a6.700 6.700 0 0 0 0 8.800M13 1.200a6.700 6.700 0 0 1 0 8.800" fill="none" stroke="currentColor" stroke-width="1.05"/></svg>
<div class="t" style="left:607px;top:1726px;height:42px;line-height:42px;font-size:24px;color:#cccccc;">0</div>
<div class="t" style="left:655px;top:1726px;height:42px;line-height:42px;font-size:24px;color:#cccccc;letter-spacing:1.082px;">-- NORMAL --</div>
<div class="t" style="left:1565px;top:1726px;height:42px;line-height:42px;font-size:24px;color:#cccccc;letter-spacing:0.598px;">Ln 14, Col 1</div>
<div class="t" style="left:1735px;top:1726px;height:42px;line-height:42px;font-size:24px;color:#cccccc;letter-spacing:0.408px;">Spaces: 2</div>
<div class="t" style="left:1879px;top:1726px;height:42px;line-height:42px;font-size:24px;color:#cccccc;letter-spacing:1.0px;">UTF-8</div>
<div class="t" style="left:1985px;top:1726px;height:42px;line-height:42px;font-size:24px;color:#cccccc;letter-spacing:-3.016px;">LF</div>
<svg class="i" style="left:2039px;top:1733px;" width="28" height="28" viewBox="0 0 16 16" fill="none" stroke="#cccccc" color="#cccccc"><path d="M6.3 2.9C5 2.9 4.700 3.600 4.700 4.600v1.700c0 .8-.5 1.200-1.400 1.300.9.100 1.400.5 1.400 1.300v1.700c0 1 .3 1.700 1.600 1.700" fill="none" stroke="currentColor" stroke-width="1"/><path d="M9.600 2.900c1.300 0 1.600.7 1.600 1.700v2.100" fill="none" stroke="currentColor" stroke-width="1"/><circle cx="11.400" cy="10.850" r="2.550" fill="currentColor" stroke="none"/><path d="M10.400 9.850l2 2M12.400 9.850l-2 2" stroke="#181818" stroke-width=".95" fill="none"/></svg>
<div class="t" style="left:2080px;top:1726px;height:42px;line-height:42px;font-size:24px;color:#cccccc;letter-spacing:0.845px;">TypeScript</div>
<svg class="i" style="left:2228px;top:1732px;" width="30" height="30" viewBox="0 0 16 16" fill="none" stroke="#cccccc" color="#cccccc"><path d="M8 3.3c-.9-1.2-2.4-1.6-3.9-1.2C2.7 2.5 2 3.6 2 5v1.6c-.8.5-1.3 1.3-1.3 2.2v1.8c0 .5.2.9.6 1.2C3.1 13.200 5.400 14.3 8 14.3s4.900-1.100 6.700-2.500c.4-.3.6-.7.6-1.200V8.800c0-.9-.5-1.700-1.300-2.200V5c0-1.400-.7-2.500-2.100-2.900C10.400 1.700 8.900 2.100 8 3.300z" fill="currentColor" stroke="none"/><rect x="3.1" y="3" width="3.9" height="3.6" rx="1.6" fill="#181818" stroke="none"/><rect x="9" y="3" width="3.9" height="3.6" rx="1.6" fill="#181818" stroke="none"/><path d="M2.4 8.400C4 7.900 6 8 8 8s4-.1 5.600.4v2.300C12 12 10 12.800 8 12.800S4 12 2.400 10.700z" fill="#181818" stroke="none"/><rect x="5.500" y="9.100" width="1.300" height="2.400" rx=".65" fill="currentColor" stroke="none"/><rect x="9.200" y="9.100" width="1.300" height="2.400" rx=".65" fill="currentColor" stroke="none"/></svg>
<svg class="i" style="left:2285px;top:1731px;" width="33" height="33" viewBox="0 0 16 16" fill="none" stroke="#cccccc" color="#cccccc"><path d="M1.400 9.200L3.400 11.600L8 5M5.300 10.600L6.300 11.600L11.300 4.300" fill="none" stroke="currentColor" stroke-width="0.95" transform="translate(1.2,0) scale(1.12,1)"/></svg>
<div class="t" style="left:2325px;top:1726px;height:42px;line-height:42px;font-size:24px;color:#cccccc;letter-spacing:0.663px;">Prettier</div>
<svg class="i" style="left:2440px;top:1733px;" width="28" height="28" viewBox="0 0 16 16" fill="none" stroke="#cccccc" color="#cccccc"><path d="M9.300 2.300A4.300 4.300 0 0 0 3.900 6.500c0 2.400-.5 4.200-1.300 5.700h10.800c-.5-1-.9-2-1.100-3.300" fill="none" stroke="currentColor" stroke-width="1.05"/><path d="M6.300 12.600a1.700 1.700 0 0 0 3.400 0z" fill="currentColor" stroke="none"/><circle cx="11.600" cy="3.800" r="2.700" fill="currentColor" stroke="none"/></svg>
</div></div>
<div id="rim"></div>
</body></html>
